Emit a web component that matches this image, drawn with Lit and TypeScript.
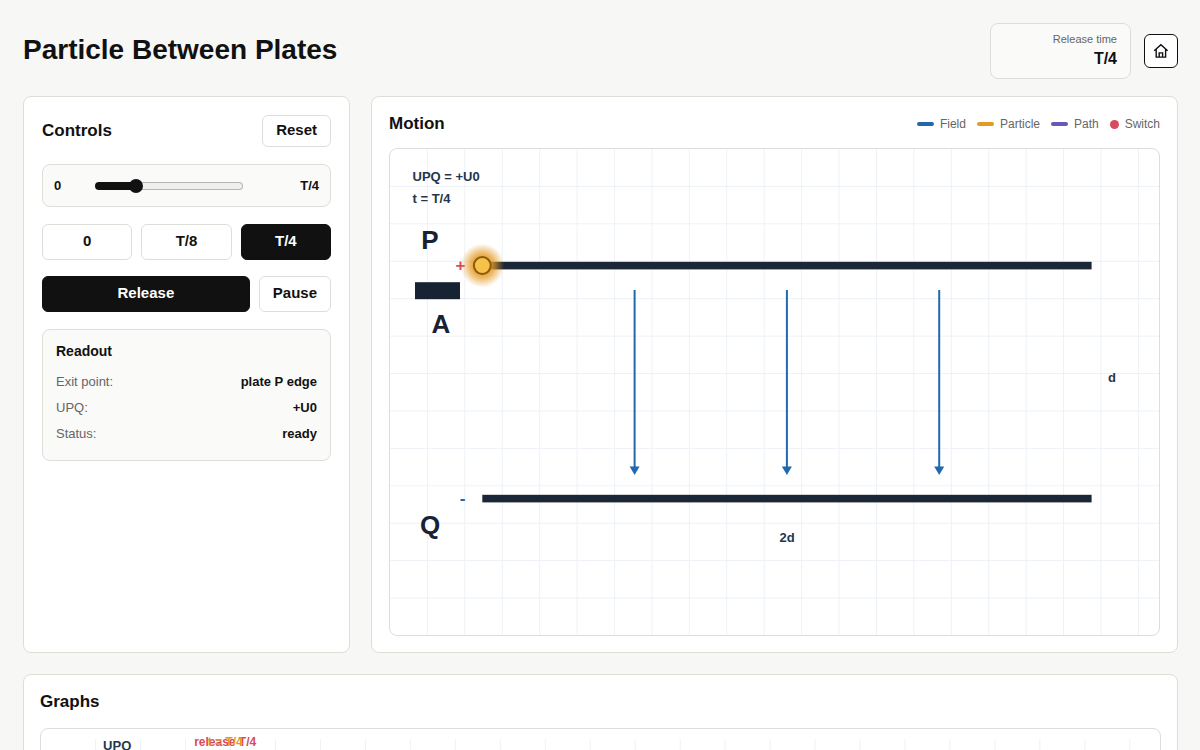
import { LitElement, html, svg, css } from "lit";
import { customElement, property, state } from "lit/decorators.js";
import { classMap } from "lit/directives/class-map.js";

const range = (n: number) => Array.from({ length: n }, (_, i) => i);

const LABELS: Record<number, string> = { 0: "0", 0.125: "T/8", 0.25: "T/4" };
const timeLabel = (v: number) => LABELS[v] ?? `${v}T`;

@customElement("motion-scene")
class MotionScene extends LitElement {
  @property() time = "T/4";

  static styles = css`
    :host { display: block; }
    svg { display: block; width: 100%; height: auto; font-family: "Liberation Sans", Arial, sans-serif; font-weight: 700; }
    .grid { stroke: #edf2f7; stroke-width: 1; }
    .note { font-size: 13px; fill: #24364d; }
    .name { font-size: 26px; fill: #172233; text-anchor: middle; }
    .mid { text-anchor: middle; }
    .sign { font-size: 17px; text-anchor: end; }
    .plus { fill: #d84a5f; }
    .minus { fill: #1f69ac; }
    .plate { fill: #1b2636; }
    .source { fill: #172233; }
    .field line { stroke: #1f69ac; stroke-width: 2; }
    .field path { fill: #1f69ac; }
    .particle { fill: #f7c24a; stroke: #8a5a10; stroke-width: 2; }
  `;

  render() {
    const step = 37.42;
    return html`
      <svg viewBox="0 0 769 486" role="img" aria-label="Motion">
        <defs>
          <radialGradient id="glow">
            <stop offset="0.3" stop-color="#e59a23" stop-opacity="1" />
            <stop offset="0.55" stop-color="#e59a23" stop-opacity="0.7" />
            <stop offset="1" stop-color="#e59a23" stop-opacity="0" />
          </radialGradient>
        </defs>
        <g class="grid">
          ${range(20).map((i) => svg`<line x1=${(i + 1) * step} x2=${(i + 1) * step} y1="0" y2="486" />`)}
          ${range(12).map((i) => svg`<line x1="0" x2="769" y1=${(i + 1) * step} y2=${(i + 1) * step} />`)}
        </g>
        <text class="note" x="22.5" y="32">UPQ = +U0</text>
        <text class="note" x="22.5" y="54">t = ${this.time}</text>
        <rect class="plate" x="92.3" y="112.8" width="609.3" height="7.6" />
        <rect class="plate" x="92.3" y="345.8" width="609.3" height="7.6" />
        <rect class="source" x="25" y="133.2" width="45" height="17" />
        <text class="name" x="40" y="100">P</text>
        <text class="name" x="51" y="184">A</text>
        <text class="name" x="40" y="385">Q</text>
        <text class="sign plus" x="75.5" y="122">+</text>
        <text class="sign minus" x="75.5" y="355">-</text>
        <g class="field">
          ${[244.6, 396.9, 549.2].map(
            (x) => svg`<line x1=${x} x2=${x} y1="141" y2="319" /><path d=${`M${x - 5} 317.5h10l-5 8.5z`} />`
          )}
        </g>
        <text class="note mid" x="722" y="233">d</text>
        <text class="note mid" x="397" y="393">2d</text>
        <circle cx="92.3" cy="116.5" r="22" fill="url(#glow)" />
        <circle class="particle" cx="92.3" cy="116.5" r="8.4" />
      </svg>
    `;
  }
}

@customElement("graph-scene")
class GraphScene extends LitElement {
  @property() time = "T/4";

  static styles = css`
    :host { display: block; }
    svg { display: block; width: 100%; height: auto; font-family: "Liberation Sans", Arial, sans-serif; font-weight: 700; }
    .grid { stroke: #edf2f7; stroke-width: 1; }
    .axis { font-size: 13px; fill: #24364d; }
    .mark { font-size: 12px; text-anchor: middle; }
    .release { fill: #d84a5f; }
    .now { fill: #e59a23; }
  `;

  render() {
    return html`
      <svg viewBox="0 0 1118 260" role="img" aria-label="Graphs">
        <g class="grid">
          ${range(24).map((i) => svg`<line x1=${54.5 + i * 44.93} x2=${54.5 + i * 44.93} y1="10" y2="250" />`)}
        </g>
        <text class="axis" x="62" y="21">UPQ</text>
        <text class="mark release" x="184" y="17">release ${this.time}</text>
        <text class="mark now" x="184" y="17">t = ${this.time}</text>
      </svg>
    `;
  }
}

@customElement("app-root")
class AppRoot extends LitElement {
  @state() release = 0.25;

  static styles = css`
    :host {
      display: block;
      min-height: 100vh;
      background: #f7f7f5;
      color: #111;
      font-family: "Liberation Sans", Arial, sans-serif;
      font-size: 13px;
    }
    * { box-sizing: border-box; }
    h1, h2, h3, p, dl, dd { margin: 0; }
    .page { padding: 23px 22px 22px 23px; }
    .top { display: flex; align-items: center; gap: 13px; margin-bottom: 17px; }
    h1 { flex: 1; font-size: 28px; line-height: 32px; padding-bottom: 3px; }
    .badge {
      width: 141px; padding: 8px 13px 10px; text-align: right;
      border: 1px solid #deded9; border-radius: 8px; background: #fafaf8;
    }
    .badge .cap { font-size: 11px; line-height: 14px; color: #666; }
    .badge .val { display: block; font-size: 16px; line-height: 18px; margin-top: 4px; font-weight: 700; }
    .home {
      width: 34px; height: 34px; display: grid; place-items: center; color: #111;
      background: #fff; border: 1px solid #111; border-radius: 6px;
    }
    .home svg { width: 16px; height: 16px; display: block; }
    .main { display: grid; grid-template-columns: 327px minmax(0, 1fr); gap: 21px; }
    .card { background: #fff; border: 1px solid #deded9; border-radius: 8px; padding: 16px 17px; }
    .controls { padding: 18px; display: flex; flex-direction: column; gap: 17px; }
    .wide { grid-column: 1 / -1; padding: 16px; }
    .head { display: flex; align-items: center; justify-content: space-between; }
    h2 { font-size: 17px; line-height: 22px; }
    .motion .head { margin-bottom: 13px; }
    .wide .head { margin-bottom: 15px; }
    .stage { border: 1px solid #deded9; border-radius: 8px; overflow: hidden; }
    button {
      font: 700 15px/18px "Liberation Sans", Arial, sans-serif; color: #111; background: #fff;
      border: 1px solid #deded9; border-radius: 6px; height: 36px; padding: 0 13px 2px; margin: 0;
    }
    button.on { background: #111; border-color: #111; color: #fff; }
    .head button { height: 32px; }
    .slider {
      display: grid; grid-template-columns: 32px 1fr 67px; gap: 9px; align-items: center;
      height: 43px; padding: 0 11px; font-weight: 700;
      border: 1px solid #deded9; border-radius: 8px; background: #fafaf8;
    }
    .slider output { text-align: right; }
    input {
      appearance: none; width: 100%; height: 8px; margin: 0;
      border: 1px solid transparent; border-radius: 4px;
      background:
        linear-gradient(#111, #111) 0 0 / var(--fill) 100% no-repeat border-box,
        linear-gradient(#efefef, #efefef) padding-box,
        linear-gradient(#b5b5b5, #b5b5b5) border-box;
    }
    input::-webkit-slider-thumb {
      appearance: none; width: 14px; height: 14px; border: 0; border-radius: 50%; background: #111;
    }
    .buttons { display: flex; flex-direction: column; gap: 16px; }
    .presets { display: grid; grid-template-columns: repeat(3, 1fr); gap: 9px; }
    .actions { display: grid; grid-template-columns: 1fr auto; gap: 9px; }
    .readout { border: 1px solid #deded9; border-radius: 8px; background: #fafaf8; padding: 13px; }
    h3 { font-size: 14px; line-height: 16px; margin-bottom: 10px; }
    .row { display: flex; justify-content: space-between; line-height: 26px; }
    .row dt { color: #666; }
    .row dd { font-weight: 700; }
    .legend { display: flex; gap: 11px; font-size: 12px; line-height: 14px; color: #666; }
    .legend span { display: flex; align-items: center; gap: 6px; }
    .legend i { width: 17px; height: 4px; border-radius: 2px; }
    .legend .field { background: #1f69ac; }
    .legend .particle { background: #e59a23; }
    .legend .path { background: #6b57b8; }
    .legend .switch { width: 9px; height: 9px; border-radius: 50%; background: #d84a5f; }
  `;

  render() {
    const label = timeLabel(this.release);
    return html`
      <div class="page">
        <header class="top">
          <h1>Particle Between Plates</h1>
          <div class="badge">
            <p class="cap">Release time</p>
            <strong class="val">${label}</strong>
          </div>
          <a class="home" href="#" aria-label="Home">
            <svg viewBox="0 0 16 16" fill="none" stroke="currentColor" stroke-width="1.4">
              <path d="M1.2 7.7 7.9 1.7l6.7 6M3.2 6v8.1h9.4V6M6.2 14.1V9.9h3.4v4.2" />
            </svg>
          </a>
        </header>
        <main class="main">
          <section class="card controls">
            <div class="head">
              <h2>Controls</h2>
              <button @click=${() => (this.release = 0)}>Reset</button>
            </div>
            <div class="slider">
              <label for="time">0</label>
              <input
                id="time" type="range" min="0" max="1" step="0.125" .value=${String(this.release)}
                style=${`--fill:${this.release * 100}%`}
                @input=${(e: Event) => (this.release = Number((e.target as HTMLInputElement).value))}
              />
              <output for="time">${label}</output>
            </div>
            <div class="buttons">
              <div class="presets">
                ${[0, 0.125, 0.25].map(
                  (v) => html`<button class=${classMap({ on: v === this.release })} @click=${() => (this.release = v)}>${timeLabel(v)}</button>`
                )}
              </div>
              <div class="actions">
                <button class="on">Release</button>
                <button>Pause</button>
              </div>
            </div>
            <div class="readout">
              <h3>Readout</h3>
              <dl>
                <div class="row"><dt>Exit point:</dt><dd>plate P edge</dd></div>
                <div class="row"><dt>UPQ:</dt><dd>+U0</dd></div>
                <div class="row"><dt>Status:</dt><dd>ready</dd></div>
              </dl>
            </div>
          </section>
          <section class="card motion">
            <div class="head">
              <h2>Motion</h2>
              <div class="legend">
                <span><i class="field"></i>Field</span>
                <span><i class="particle"></i>Particle</span>
                <span><i class="path"></i>Path</span>
                <span><i class="switch"></i>Switch</span>
              </div>
            </div>
            <motion-scene class="stage" .time=${label}></motion-scene>
          </section>
          <section class="card wide">
            <div class="head"><h2>Graphs</h2></div>
            <graph-scene class="stage" .time=${label}></graph-scene>
          </section>
        </main>
      </div>
    `;
  }
}
